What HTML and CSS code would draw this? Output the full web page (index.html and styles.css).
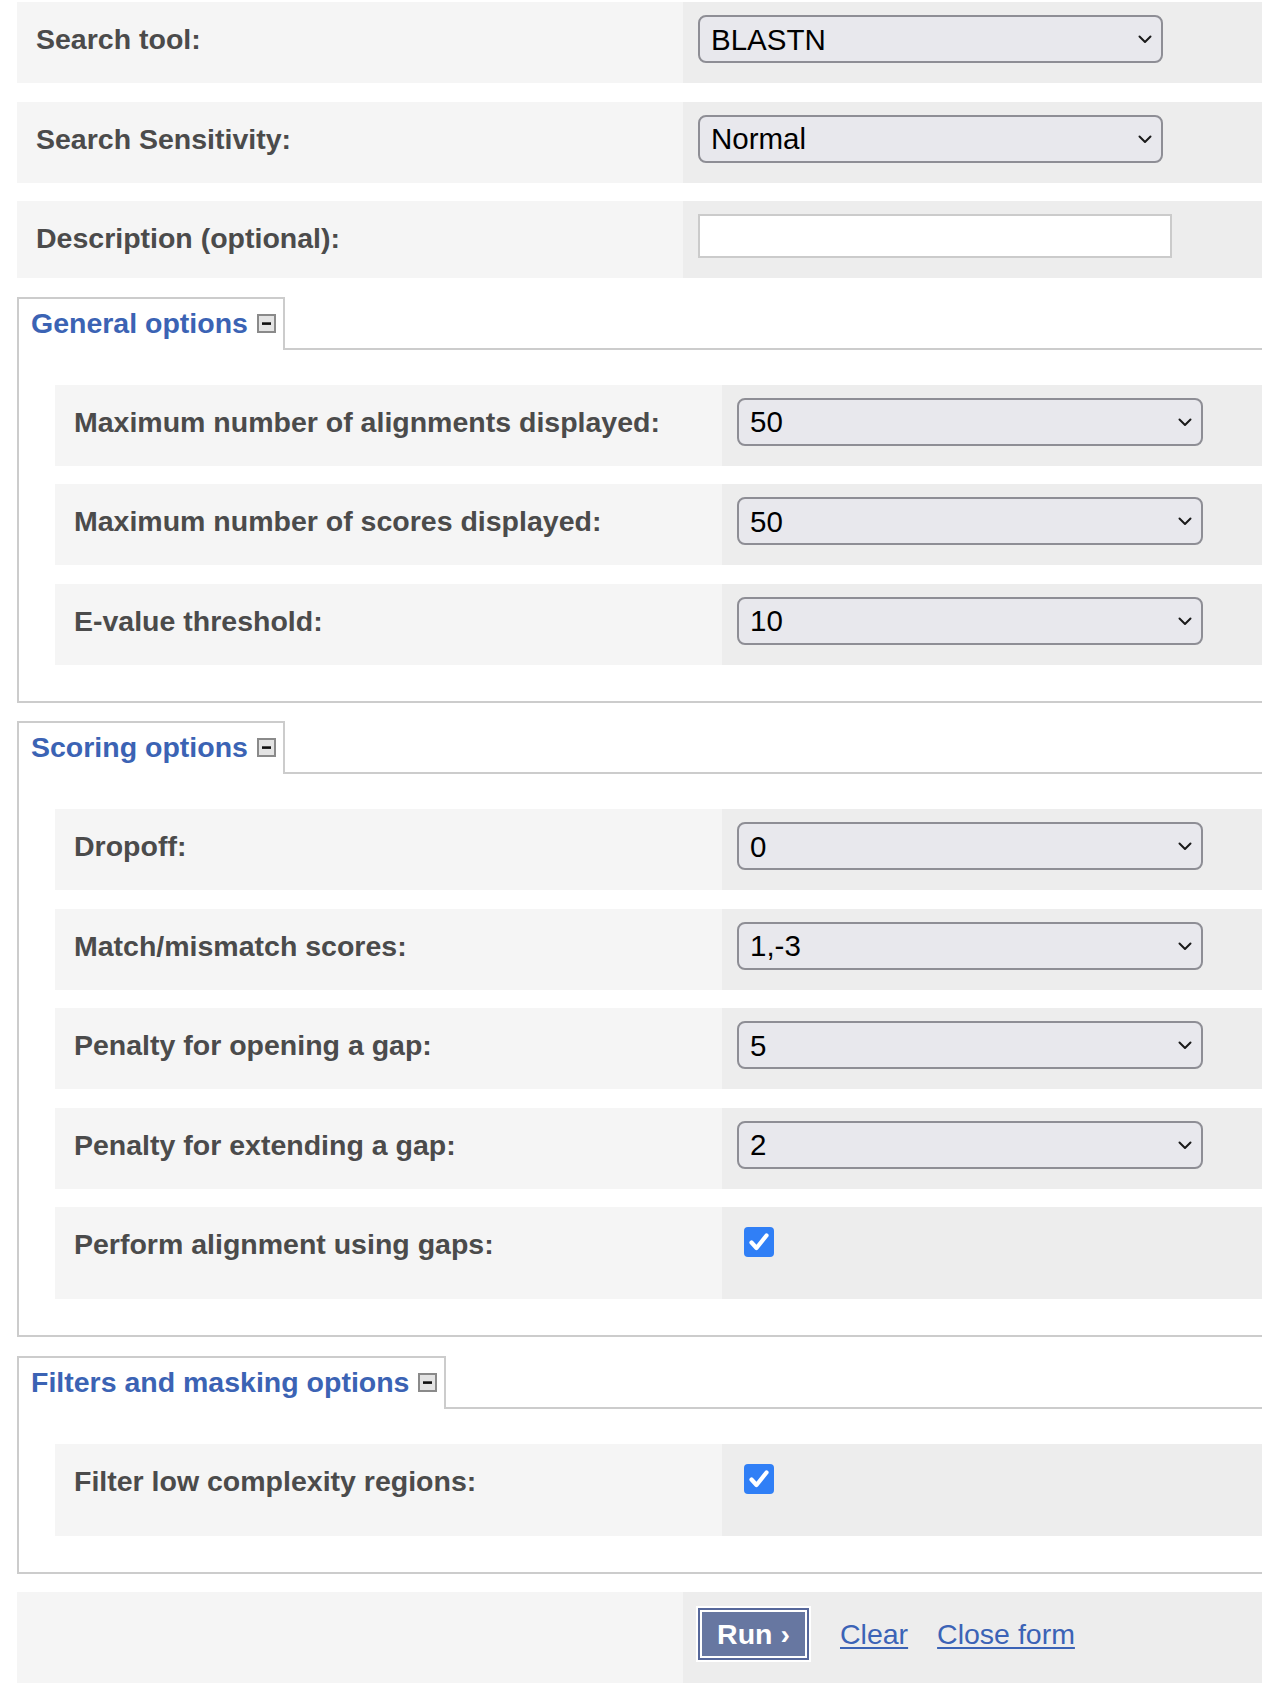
FILE: index.html
```html
<!DOCTYPE html>
<html lang="en">
<head>
<meta charset="utf-8">
<title>BLAST search form</title>
<link rel="stylesheet" href="styles.css">
</head>
<body>
<form class="form">
  <div class="row">
    <div class="row-label">Search tool:</div>
    <div class="row-field">
      <div class="select-wrap">
        <select class="select"><option>BLASTN</option></select>
        <svg class="chev" width="14" height="9" viewBox="0 0 14 9"><polyline points="1.5,1.5 7,7 12.5,1.5" fill="none" stroke="#1a1a1a" stroke-width="2" stroke-linecap="round" stroke-linejoin="round"/></svg>
      </div>
    </div>
  </div>

  <div class="row">
    <div class="row-label">Search Sensitivity:</div>
    <div class="row-field">
      <div class="select-wrap">
        <select class="select"><option>Normal</option></select>
        <svg class="chev" width="14" height="9" viewBox="0 0 14 9"><polyline points="1.5,1.5 7,7 12.5,1.5" fill="none" stroke="#1a1a1a" stroke-width="2" stroke-linecap="round" stroke-linejoin="round"/></svg>
      </div>
    </div>
  </div>

  <div class="row">
    <div class="row-label">Description (optional):</div>
    <div class="row-field">
      <input class="text-input" type="text">
    </div>
  </div>

  <section class="group">
    <div class="group-head">
      <div class="tab">General options
        <svg class="toggle" width="19" height="19" viewBox="0 0 19 19"><rect x="1" y="1" width="17" height="17" fill="#e4e4e4" stroke="#8a8a8a" stroke-width="2"/><rect x="5" y="8.3" width="9" height="2.6" fill="#111"/></svg>
      </div>
      <div class="tab-rest"></div>
    </div>
    <div class="group-body">
      <div class="row row-inner">
        <div class="row-label">Maximum number of alignments displayed:</div>
        <div class="row-field">
          <div class="select-wrap wide">
            <select class="select"><option>50</option></select>
            <svg class="chev" width="14" height="9" viewBox="0 0 14 9"><polyline points="1.5,1.5 7,7 12.5,1.5" fill="none" stroke="#1a1a1a" stroke-width="2" stroke-linecap="round" stroke-linejoin="round"/></svg>
          </div>
        </div>
      </div>
      <div class="row row-inner">
        <div class="row-label">Maximum number of scores displayed:</div>
        <div class="row-field">
          <div class="select-wrap wide">
            <select class="select"><option>50</option></select>
            <svg class="chev" width="14" height="9" viewBox="0 0 14 9"><polyline points="1.5,1.5 7,7 12.5,1.5" fill="none" stroke="#1a1a1a" stroke-width="2" stroke-linecap="round" stroke-linejoin="round"/></svg>
          </div>
        </div>
      </div>
      <div class="row row-inner">
        <div class="row-label">E-value threshold:</div>
        <div class="row-field">
          <div class="select-wrap wide">
            <select class="select"><option>10</option></select>
            <svg class="chev" width="14" height="9" viewBox="0 0 14 9"><polyline points="1.5,1.5 7,7 12.5,1.5" fill="none" stroke="#1a1a1a" stroke-width="2" stroke-linecap="round" stroke-linejoin="round"/></svg>
          </div>
        </div>
      </div>
    </div>
  </section>

  <section class="group">
    <div class="group-head">
      <div class="tab">Scoring options
        <svg class="toggle" width="19" height="19" viewBox="0 0 19 19"><rect x="1" y="1" width="17" height="17" fill="#e4e4e4" stroke="#8a8a8a" stroke-width="2"/><rect x="5" y="8.3" width="9" height="2.6" fill="#111"/></svg>
      </div>
      <div class="tab-rest"></div>
    </div>
    <div class="group-body">
      <div class="row row-inner">
        <div class="row-label">Dropoff:</div>
        <div class="row-field">
          <div class="select-wrap wide">
            <select class="select"><option>0</option></select>
            <svg class="chev" width="14" height="9" viewBox="0 0 14 9"><polyline points="1.5,1.5 7,7 12.5,1.5" fill="none" stroke="#1a1a1a" stroke-width="2" stroke-linecap="round" stroke-linejoin="round"/></svg>
          </div>
        </div>
      </div>
      <div class="row row-inner">
        <div class="row-label">Match/mismatch scores:</div>
        <div class="row-field">
          <div class="select-wrap wide">
            <select class="select"><option>1,-3</option></select>
            <svg class="chev" width="14" height="9" viewBox="0 0 14 9"><polyline points="1.5,1.5 7,7 12.5,1.5" fill="none" stroke="#1a1a1a" stroke-width="2" stroke-linecap="round" stroke-linejoin="round"/></svg>
          </div>
        </div>
      </div>
      <div class="row row-inner">
        <div class="row-label">Penalty for opening a gap:</div>
        <div class="row-field">
          <div class="select-wrap wide">
            <select class="select"><option>5</option></select>
            <svg class="chev" width="14" height="9" viewBox="0 0 14 9"><polyline points="1.5,1.5 7,7 12.5,1.5" fill="none" stroke="#1a1a1a" stroke-width="2" stroke-linecap="round" stroke-linejoin="round"/></svg>
          </div>
        </div>
      </div>
      <div class="row row-inner">
        <div class="row-label">Penalty for extending a gap:</div>
        <div class="row-field">
          <div class="select-wrap wide">
            <select class="select"><option>2</option></select>
            <svg class="chev" width="14" height="9" viewBox="0 0 14 9"><polyline points="1.5,1.5 7,7 12.5,1.5" fill="none" stroke="#1a1a1a" stroke-width="2" stroke-linecap="round" stroke-linejoin="round"/></svg>
          </div>
        </div>
      </div>
      <div class="row row-inner">
        <div class="row-label">Perform alignment using gaps:</div>
        <div class="row-field check-field">
          <svg class="checkbox" width="30" height="30" viewBox="0 0 30 30"><rect x="0" y="0" width="30" height="30" rx="4" fill="#307ff6"/><polyline points="7.5,15.5 12.5,21 22.5,8.5" fill="none" stroke="#fff" stroke-width="4.2" stroke-linecap="round" stroke-linejoin="round"/></svg>
        </div>
      </div>
    </div>
  </section>

  <section class="group">
    <div class="group-head">
      <div class="tab">Filters and masking options
        <svg class="toggle" width="19" height="19" viewBox="0 0 19 19"><rect x="1" y="1" width="17" height="17" fill="#e4e4e4" stroke="#8a8a8a" stroke-width="2"/><rect x="5" y="8.3" width="9" height="2.6" fill="#111"/></svg>
      </div>
      <div class="tab-rest"></div>
    </div>
    <div class="group-body">
      <div class="row row-inner">
        <div class="row-label">Filter low complexity regions:</div>
        <div class="row-field check-field">
          <svg class="checkbox" width="30" height="30" viewBox="0 0 30 30"><rect x="0" y="0" width="30" height="30" rx="4" fill="#307ff6"/><polyline points="7.5,15.5 12.5,21 22.5,8.5" fill="none" stroke="#fff" stroke-width="4.2" stroke-linecap="round" stroke-linejoin="round"/></svg>
        </div>
      </div>
    </div>
  </section>

  <div class="row row-actions">
    <div class="row-label"></div>
    <div class="row-field actions">
      <button class="run" type="button">Run ›</button>
      <a class="link" href="#">Clear</a>
      <a class="link" href="#">Close form</a>
    </div>
  </div>
</form>
</body>
</html>
```

FILE: styles.css
```css
html, body {
  background: #ffffff;
}

body {
  margin: 2px 0 0 17px;
  font-family: "Liberation Sans", Arial, Helvetica, sans-serif;
  overflow-x: hidden;
}

.form {
  display: flex;
  flex-direction: column;
  gap: 18.5px;
}

.row {
  display: grid;
  grid-template-columns: 666px 1fr;
  align-items: stretch;
}

.row-inner {
  grid-template-columns: 667px 1fr;
}

.row-label {
  background: #f5f5f5;
  padding: 13px 19px 16px;
  line-height: 48px;
  font-size: 28.5px;
  font-weight: bold;
  color: #4b4b4b;
  white-space: nowrap;
}

.row-field {
  background: #ededed;
  padding: 13px 15px 20px;
}

.select-wrap {
  position: relative;
  width: 465px;
  height: 48px;
}

.select-wrap.wide {
  width: 466px;
}

.select {
  -webkit-appearance: none;
  appearance: none;
  box-sizing: border-box;
  width: 100%;
  height: 48px;
  margin: 0;
  border: 2px solid #8e8e95;
  border-radius: 8px;
  background: #e8e8ed;
  color: #000;
  font-family: "Liberation Sans", Arial, Helvetica, sans-serif;
  font-size: 29.5px;
  padding: 0 40px 0 11px;
  outline: none;
}

.chev {
  position: absolute;
  right: 11px;
  top: 20px;
  pointer-events: none;
}

.text-input {
  display: block;
  box-sizing: border-box;
  width: 474px;
  height: 44px;
  margin: 0;
  border: 2px solid #cbcbcb;
  background: #ffffff;
  font-size: 28px;
}

.group {
  display: flex;
  flex-direction: column;
}

.group-head {
  display: flex;
  height: 53px;
}

.tab {
  display: flex;
  align-items: center;
  gap: 9px;
  border: 2px solid #cccccc;
  border-bottom: none;
  padding: 0 7px 2px 12px;
  color: #3b63b4;
  font-size: 28.5px;
  font-weight: bold;
  white-space: nowrap;
}

.toggle {
  display: block;
  flex: none;
}

.tab-rest {
  flex: 1;
  border-bottom: 2px solid #cccccc;
}

.group-body {
  display: flex;
  flex-direction: column;
  gap: 18.5px;
  border-left: 2px solid #cccccc;
  border-bottom: 2px solid #cccccc;
  padding: 35px 0 36px 36px;
}

.check-field {
  padding: 20px 15px 42px 22px;
}

.checkbox {
  display: block;
}

.actions {
  display: flex;
  align-items: center;
  padding: 16px 15px 23px;
}

.run {
  box-sizing: border-box;
  width: 111px;
  height: 52px;
  margin: 0;
  padding: 0;
  border: 2px solid #56679a;
  box-shadow: 0 0 0 2px #ffffff, inset 0 0 0 2px #ffffff;
  background: #6777a1;
  color: #ffffff;
  font-family: "Liberation Sans", Arial, Helvetica, sans-serif;
  font-size: 28.5px;
  font-weight: bold;
}

.link {
  margin-left: 29px;
  color: #3b63b6;
  font-size: 28.5px;
  text-decoration: underline;
  text-underline-offset: 3px;
}

.run + .link {
  margin-left: 31px;
}
```
